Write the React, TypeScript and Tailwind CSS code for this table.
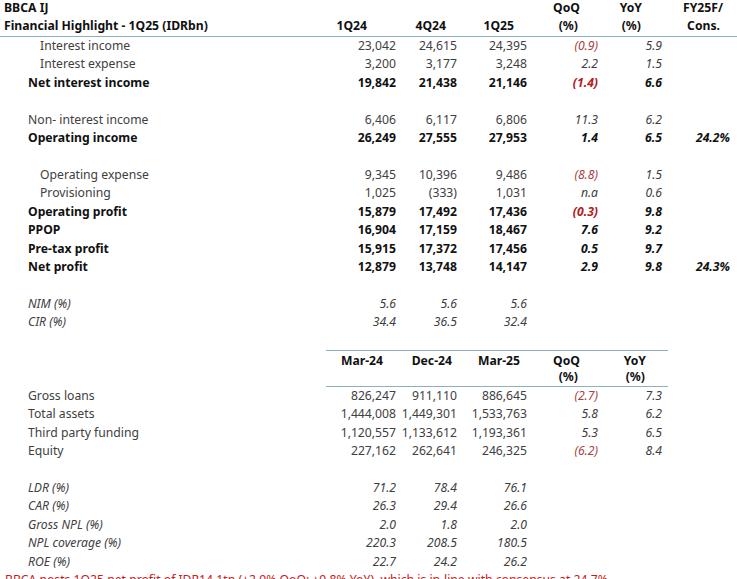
import React from 'react'

const grid = 'grid grid-cols-[326px_70px_61px_70px_71px_64px_68px_1fr]'

type RowProps = {
  label?: string
  indent?: 0 | 1 | 2
  bold?: boolean
  italic?: boolean
  vals?: string[]
}

const indentClass = ['pl-[4px]', 'pl-[28px]', 'pl-[40px]']

const DataRow = ({ label = '', indent = 1, bold, italic, vals = [] }: RowProps) => (
  <div className={`${grid} h-[18.43px] items-center whitespace-nowrap`}>
    <div
      className={`${indentClass[indent]} ${bold ? 'font-bold text-[#111]' : 'text-[#404040]'} ${
        italic ? 'italic' : ''
      }`}
    >
      {label}
    </div>
    {vals.map((v, i) => {
      const isPct = i >= 3
      const red = i === 3 && v.startsWith('(')
      let color = bold ? 'text-[#111]' : 'text-[#404040]'
      if (red) color = bold ? 'text-[#b0201c]' : 'text-[#a8433f]'
      return (
        <div
          key={i}
          className={`text-right ${bold ? 'font-bold' : ''} ${italic || isPct ? 'italic' : ''} ${color}`}
        >
          {v}
        </div>
      )
    })}
  </div>
)

const Blank = () => <div className="h-[18.43px]" />

const App = () => {
  return (
    <div className="w-[737px] h-[579px] overflow-hidden bg-white font-['Noto_Sans',sans-serif] text-[12.2px] leading-none">
      {/* header of first table */}
      <div className={`${grid} h-[17px] items-center font-bold text-[#111]`}>
        <div className="pl-[4px]">BBCA IJ</div>
        <div />
        <div />
        <div />
        <div className="text-right pr-[18px]">QoQ</div>
        <div className="text-right pr-[20px]">YoY</div>
        <div className="text-right pr-[7px]">FY25F/</div>
      </div>
      <div className={`${grid} h-[19.8px] items-center font-bold text-[#111] border-b border-[#8db0bd]`}>
        <div className="pl-[4px]">Financial Highlight - 1Q25 (IDRbn)</div>
        <div className="text-right pr-[29px]">1Q24</div>
        <div className="text-right pr-[11px]">4Q24</div>
        <div className="text-right pr-[13px]">1Q25</div>
        <div className="text-right pr-[20px]">(%)</div>
        <div className="text-right pr-[21px]">(%)</div>
        <div className="text-right pr-[10px]">Cons.</div>
      </div>

      <DataRow label="Interest income" indent={2} vals={['23,042', '24,615', '24,395', '(0.9)', '5.9']} />
      <DataRow label="Interest expense" indent={2} vals={['3,200', '3,177', '3,248', '2.2', '1.5']} />
      <DataRow label="Net interest income" bold vals={['19,842', '21,438', '21,146', '(1.4)', '6.6']} />
      <Blank />
      <DataRow label="Non- interest income" vals={['6,406', '6,117', '6,806', '11.3', '6.2']} />
      <DataRow label="Operating income" bold vals={['26,249', '27,555', '27,953', '1.4', '6.5', '24.2%']} />
      <Blank />
      <DataRow label="Operating expense" indent={2} vals={['9,345', '10,396', '9,486', '(8.8)', '1.5']} />
      <DataRow label="Provisioning" indent={2} vals={['1,025', '(333)', '1,031', 'n.a', '0.6']} />
      <DataRow label="Operating profit" bold vals={['15,879', '17,492', '17,436', '(0.3)', '9.8']} />
      <DataRow label="PPOP" bold vals={['16,904', '17,159', '18,467', '7.6', '9.2']} />
      <DataRow label="Pre-tax profit" bold vals={['15,915', '17,372', '17,456', '0.5', '9.7']} />
      <DataRow label="Net profit" bold vals={['12,879', '13,748', '14,147', '2.9', '9.8', '24.3%']} />
      <Blank />
      <DataRow label="NIM (%)" italic vals={['5.6', '5.6', '5.6']} />
      <DataRow label="CIR (%)" italic vals={['34.4', '36.5', '32.4']} />
      <Blank />

      {/* header of second table */}
      <div className={`${grid} h-[18.43px] items-end pb-[1px] font-bold text-[#111]`}>
        <div />
        <div className="h-full flex items-end justify-end pr-[13px] border-t border-[#8db0bd]">Mar-24</div>
        <div className="h-full flex items-end justify-end pr-[5px] border-t border-[#8db0bd]">Dec-24</div>
        <div className="h-full flex items-end justify-end pr-[7px] border-t border-[#8db0bd]">Mar-25</div>
        <div className="h-full flex items-end justify-end pr-[18px] border-t border-[#8db0bd]">QoQ</div>
        <div className="h-full flex items-end justify-end pr-[16px] border-t border-[#8db0bd]">YoY</div>
        <div className="h-full w-[6px] border-t border-[#8db0bd]" />
      </div>
      <div className={`${grid} h-[18.43px] items-end font-bold text-[#111]`}>
        <div />
        <div className="h-full border-b border-[#8db0bd]" />
        <div className="h-full border-b border-[#8db0bd]" />
        <div className="h-full border-b border-[#8db0bd]" />
        <div className="h-full flex items-center justify-end pr-[20px] border-b border-[#8db0bd]">(%)</div>
        <div className="h-full flex items-center justify-end pr-[17px] border-b border-[#8db0bd]">(%)</div>
        <div className="h-full w-[6px] border-b border-[#8db0bd]" />
      </div>

      <DataRow label="Gross loans" vals={['826,247', '911,110', '886,645', '(2.7)', '7.3']} />
      <DataRow label="Total assets" vals={['1,444,008', '1,449,301', '1,533,763', '5.8', '6.2']} />
      <DataRow label="Third party funding" vals={['1,120,557', '1,133,612', '1,193,361', '5.3', '6.5']} />
      <DataRow label="Equity" vals={['227,162', '262,641', '246,325', '(6.2)', '8.4']} />
      <Blank />
      <DataRow label="LDR (%)" italic vals={['71.2', '78.4', '76.1']} />
      <DataRow label="CAR (%)" italic vals={['26.3', '29.4', '26.6']} />
      <DataRow label="Gross NPL (%)" italic vals={['2.0', '1.8', '2.0']} />
      <DataRow label="NPL coverage (%)" italic vals={['220.3', '208.5', '180.5']} />
      <DataRow label="ROE (%)" italic vals={['22.7', '24.2', '26.2']} />

      <div className="pl-[5px] pt-[3px] whitespace-nowrap text-[#c0201c]">
        BBCA posts 1Q25 net profit of IDR14.1tn (+2.9% QoQ; +9.8% YoY), which is in-line with consensus at 24.7%
      </div>
    </div>
  )
}

export default App
